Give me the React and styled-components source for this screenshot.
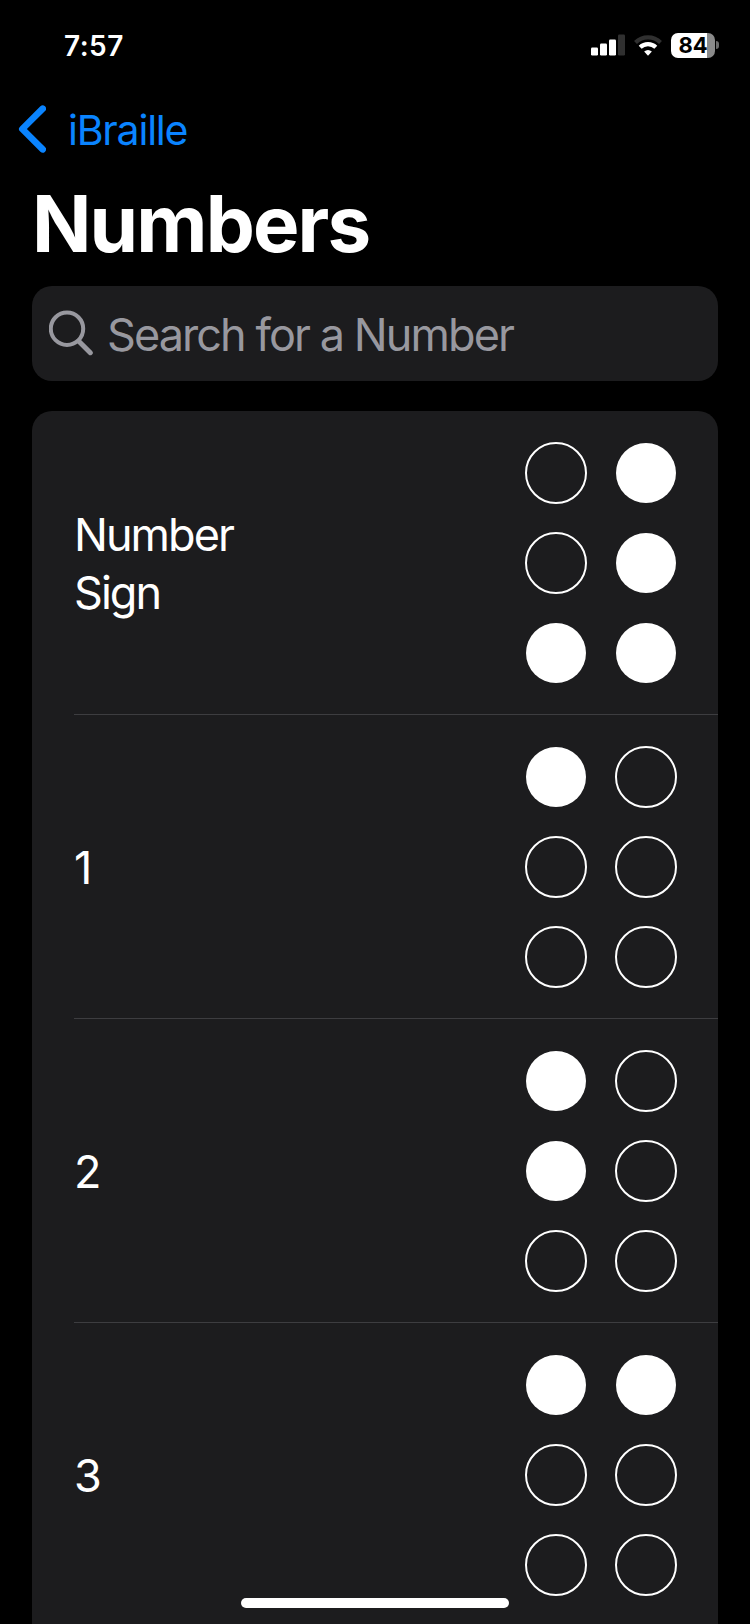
import React from "react";
import styled, { createGlobalStyle } from "styled-components";

const GlobalStyle = createGlobalStyle`
  * { box-sizing: border-box; }
  body {
    margin: 0;
    background: #000;
    color: #fff;
    font-family: Inter, "Liberation Sans", sans-serif;
  }
`;

const Screen = styled.div`
  position: relative;
  width: 750px;
  height: 1624px;
  overflow: hidden;
  background: #000;
  display: flex;
  flex-direction: column;
`;

const StatusBar = styled.header`
  height: 90px;
  padding: 0 31px 0 64px;
  display: flex;
  align-items: center;
  justify-content: space-between;
  flex-shrink: 0;
`;

const Time = styled.span`
  padding-top: 1px;
  font-size: 28px;
  line-height: 34px;
  font-weight: 600;
  letter-spacing: 0.5px;
`;

const StatusIcons = styled.div`
  display: flex;
  align-items: center;
`;

const SignalIcon = styled.svg`
  margin-right: 9px;
`;

const WifiIcon = styled.svg`
  margin-right: 9px;
`;

const Battery = styled.div`
  width: 44px;
  height: 25px;
  border-radius: 7px;
  background: linear-gradient(to right, #fff 36.5px, #8a8a8a 36.5px);
  color: #000;
  font-size: 22px;
  line-height: 25px;
  font-weight: 700;
  text-align: center;
`;

const BatteryTip = styled.div`
  width: 3px;
  height: 8px;
  margin-left: 1px;
  border-radius: 0 4px 4px 0;
  background: #6a6a6a;
`;

const NavBar = styled.nav`
  height: 78px;
  padding: 0 18px;
  display: flex;
  align-items: center;
  gap: 22px;
  color: #0a84ff;
  flex-shrink: 0;
`;

const BackLabel = styled.span`
  padding-top: 1px;
  font-size: 41px;
  line-height: 50px;
  letter-spacing: -1.2px;
`;

const Title = styled.h1`
  margin: 0;
  padding: 10px 32px 0;
  height: 118px;
  font-size: 78px;
  line-height: 92px;
  font-weight: 700;
  letter-spacing: -1.85px;
  flex-shrink: 0;
`;

const SearchField = styled.div`
  height: 95px;
  margin: 0 32px 30px;
  padding: 0 17px;
  border-radius: 20px;
  background: #1c1c1e;
  color: #98989f;
  display: flex;
  align-items: center;
  gap: 14px;
  flex-shrink: 0;
`;

const SearchIcon = styled.svg`
  margin-bottom: 2px;
`;

const Placeholder = styled.span`
  padding-top: 2px;
  font-size: 45px;
  line-height: 58px;
  letter-spacing: -1.92px;
  white-space: nowrap;
`;

const List = styled.ul`
  list-style: none;
  margin: 0 32px;
  padding: 0 0 0 42px;
  border-radius: 20px 20px 0 0;
  background: #1c1c1e;
`;

const Row = styled.li`
  height: 304px;
  padding: 1px 42px 0 0;
  border-bottom: 1px solid #3d3d40;
  display: flex;
  align-items: center;
  justify-content: space-between;
`;

const RowLabel = styled.span`
  width: 200px;
  padding-top: 2px;
  font-size: 45px;
  line-height: 58px;
  letter-spacing: -1.95px;
`;

const BrailleCell = styled.div`
  display: grid;
  grid-template-columns: repeat(2, 60px);
  grid-auto-rows: 60px;
  gap: 30px;
`;

const Dot = styled.span`
  margin: ${(p) => (p.$raised ? "0" : "-1px")};
  border-radius: 50%;
  border: ${(p) => (p.$raised ? "none" : "2px solid #fff")};
  background: ${(p) => (p.$raised ? "#fff" : "transparent")};
`;

const HomeIndicator = styled.div`
  position: absolute;
  left: 241px;
  bottom: 16px;
  width: 268px;
  height: 10px;
  border-radius: 5px;
  background: #fff;
`;

/* Dots run left to right, top to bottom. */
const rows = [
  { label: "Number Sign", dots: [0, 1, 0, 1, 1, 1] },
  { label: "1", dots: [1, 0, 0, 0, 0, 0] },
  { label: "2", dots: [1, 0, 1, 0, 0, 0] },
  { label: "3", dots: [1, 1, 0, 0, 0, 0] },
];

export default function App() {
  return (
    <>
      <GlobalStyle />
      <Screen>
        <StatusBar>
          <Time>7:57</Time>
          <StatusIcons>
            <SignalIcon width="34" height="22" viewBox="0 0 34 22">
              <rect x="0" y="13.5" width="7" height="8" rx="1.2" fill="#fff" />
              <rect x="9" y="9.5" width="7" height="12" rx="1.2" fill="#fff" />
              <rect x="18" y="5.5" width="7" height="16" rx="1.2" fill="#fff" />
              <rect x="27" y="0.5" width="7" height="21" rx="1.2" fill="#303030" />
            </SignalIcon>
            <WifiIcon width="28" height="21" viewBox="0 0 28 21">
              <g fill="none" strokeWidth="4.2">
                <path d="M1.5 7.4A18 18 0 0 1 26.5 7.4" stroke="#303030" />
                <path d="M6.2 12.2A11.2 11.2 0 0 1 21.8 12.2" stroke="#fff" />
              </g>
              <path d="M14 20.7L10.1 16.6Q14 13.2 17.9 16.6Z" fill="#fff" />
            </WifiIcon>
            <Battery>84</Battery>
            <BatteryTip />
          </StatusIcons>
        </StatusBar>
        <NavBar>
          <svg width="28" height="48" viewBox="0 0 28 48">
            <path
              d="M24.7 3.7L4.3 24L24.7 44.3"
              fill="none"
              stroke="currentColor"
              strokeWidth="6.6"
              strokeLinecap="round"
              strokeLinejoin="round"
            />
          </svg>
          <BackLabel>iBraille</BackLabel>
        </NavBar>
        <Title>Numbers</Title>
        <SearchField>
          <SearchIcon width="44" height="46" viewBox="0 0 44 46">
            <g fill="none" stroke="currentColor" strokeWidth="4">
              <circle cx="18" cy="18.7" r="16.2" />
              <path d="M29.8 31.2L41.3 42.7" strokeWidth="5" strokeLinecap="round" />
            </g>
          </SearchIcon>
          <Placeholder>Search for a Number</Placeholder>
        </SearchField>
        <List>
          {rows.map((row) => (
            <Row key={row.label}>
              <RowLabel>{row.label}</RowLabel>
              <BrailleCell>
                {row.dots.map((raised, i) => (
                  <Dot key={i} $raised={Boolean(raised)} />
                ))}
              </BrailleCell>
            </Row>
          ))}
        </List>
        <HomeIndicator />
      </Screen>
    </>
  );
}
